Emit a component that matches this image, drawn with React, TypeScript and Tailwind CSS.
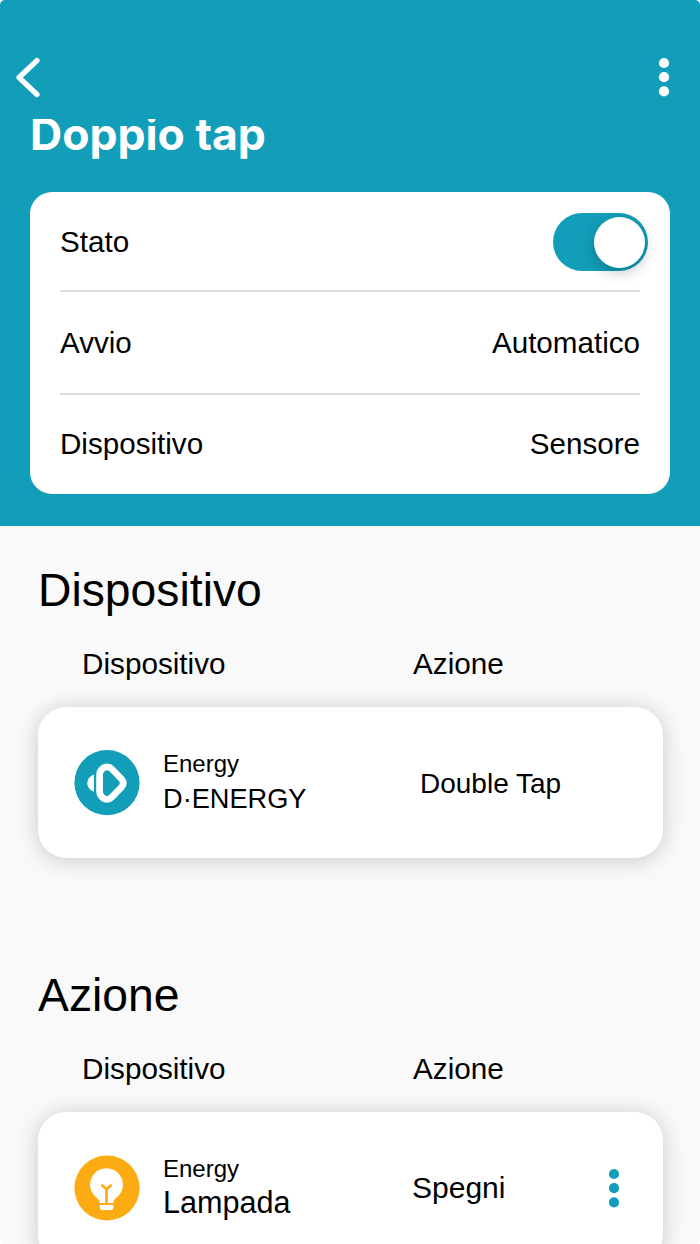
import React from "react";

type Item = {
  icon: React.ReactNode;
  name: string;
  nameClass: string;
  action: string;
  actionClass: string;
  menu?: boolean;
};

export default function App() {
  return (
    <div className="h-[1244px] w-[700px] overflow-hidden rounded-[5px] bg-[#f9f9f9] font-['Liberation_Sans',Arial,sans-serif] text-black">
      {/* Header */}
      <header className="h-[526px] bg-[#129eb8] px-[30px] pt-[56px]">
        <div className="-mx-[15px] flex h-[42px] items-center justify-between pr-[14px]">
          <button aria-label="Indietro">
            <svg width="26" height="42" viewBox="0 0 26 42" fill="none" className="block">
              <path d="M22 4.5 L4 21.5 L22 38.5" stroke="white" strokeWidth="5.2" strokeLinecap="round" strokeLinejoin="round" />
            </svg>
          </button>
          <button aria-label="Menu" className="text-white">
            <Dots />
          </button>
        </div>

        <h1 className="mt-[20.5px] flex h-[47.5px] items-center overflow-hidden font-[Inter,sans-serif] text-[44.5px] leading-[48px] font-bold whitespace-nowrap text-white">
          <span className="-mt-[16px]">Doppio tap</span>
        </h1>

        <div className="mt-[26px] flex h-[302px] flex-col rounded-[22px] bg-white px-[30px] text-[29.6px]">
          <Row label="Stato" className="h-[98px] pt-[2px]">
            <Toggle />
          </Row>
          <div className="h-[2px] shrink-0 bg-[#dcdcdc]" />
          <Row label="Avvio" className="h-[101px] pt-px">
            Automatico
          </Row>
          <div className="h-[2px] shrink-0 bg-[#dcdcdc]" />
          <Row label="Dispositivo" className="h-[98px]">
            Sensore
          </Row>
        </div>
      </header>

      <Section
        title="Dispositivo"
        item={{
          icon: <EnergyIcon />,
          name: "D·ENERGY",
          nameClass: "mt-[3px] text-[27.2px]",
          action: "Double Tap",
          actionClass: "pt-[3px] pl-[8px] text-[28px]",
        }}
      />
      <Section
        title="Azione"
        item={{
          icon: <BulbIcon />,
          name: "Lampada",
          nameClass: "mt-px mb-[2px] text-[30.6px]",
          action: "Spegni",
          actionClass: "text-[30px]",
          menu: true,
        }}
      />
    </div>
  );
}

function Row({ label, className, children }: { label: string; className: string; children: React.ReactNode }) {
  return (
    <div className={`flex shrink-0 items-center justify-between ${className}`}>
      <span>{label}</span>
      <span>{children}</span>
    </div>
  );
}

function Toggle() {
  return (
    <span className="-mr-2 flex h-[58px] w-[95px] items-center justify-end rounded-full bg-[#129eb8] pr-[3px]">
      <span className="size-[51px] rounded-full bg-white shadow-[0_5px_14px_rgba(0,0,0,0.22)]" />
    </span>
  );
}

function Section({ title, item }: { title: string; item: Item }) {
  return (
    <section className="flex h-[405px] flex-col pt-[34px]">
      <h2 className="pl-[38px] text-[46.3px] leading-[60px]">{title}</h2>
      <div className="mt-[24px] flex h-[40px] items-center pl-[82px] text-[29.7px]">
        <span className="w-[331px]">Dispositivo</span>
        <span>Azione</span>
      </div>
      {/* The list clips the card shadow at its top edge */}
      <div className="mt-[8px] overflow-hidden px-[37.5px] pt-[15px] pb-[40px]">
        <div className="flex h-[151px] items-center rounded-[28px] bg-white pl-[36.5px] shadow-[0_2px_22px_rgba(0,0,0,0.2)]">
          {item.icon}
          <div className="ml-[23px] w-[249px]">
            <div className="text-[24px] leading-[30px]">Energy</div>
            <div className={`leading-[34px] ${item.nameClass}`}>{item.name}</div>
          </div>
          <div className={`w-[195px] ${item.actionClass}`}>{item.action}</div>
          {item.menu && (
            <button aria-label="Opzioni" className="text-[#129eb8]">
              <Dots />
            </button>
          )}
        </div>
      </div>
    </section>
  );
}

function Dots() {
  return (
    <svg width="14" height="40" viewBox="0 0 14 40" fill="currentColor" className="block">
      <circle cx="7" cy="6" r="5.1" />
      <circle cx="7" cy="20.2" r="5.1" />
      <circle cx="7" cy="34.4" r="5.1" />
    </svg>
  );
}

function EnergyIcon() {
  return (
    <svg width="66" height="66" viewBox="0 0 66 66" className="shrink-0">
      <circle cx="33" cy="32.7" r="32.6" fill="#129eb8" />
      <path d="M20 24.5 V41.8 C15.3 40 13.3 36.5 13.3 33.2 C13.3 30 15.3 26.3 20 24.5Z" fill="white" />
      <path
        d="M25.6 24.5 C25.6 20.5 29.5 16.8 33.3 16.8 C35.3 16.8 36.6 17.8 37.8 19 L47.5 29 C50 31.6 50 34.6 47.5 37.2 L37.8 47.2 C36.6 48.4 35.3 49.4 33.3 49.4 C29.5 49.4 25.6 45.7 25.6 41.7Z"
        fill="none"
        stroke="white"
        strokeWidth="6.7"
        strokeLinejoin="round"
      />
    </svg>
  );
}

function BulbIcon() {
  return (
    <svg width="66" height="66" viewBox="0 0 66 66" className="shrink-0">
      <circle cx="33" cy="33" r="32.6" fill="#fdab13" />
      <path d="M32.5 13.2 A16.5 16.5 0 0 0 22.8 43 C24.8 44.5 25.8 45.5 25.8 48 H39.2 C39.2 45.5 40.2 44.5 42.2 43 A16.5 16.5 0 0 0 32.5 13.2Z" fill="white" />
      <path d="M32.5 48 V34.5 M28.3 30.5 L32.5 34.3 L36.7 30.5" fill="none" stroke="#fdab13" strokeWidth="2.7" strokeLinecap="round" strokeLinejoin="round" />
      <path d="M25.8 50 H39.2 V52.5 Q39.2 55 36.7 55 H28.3 Q25.8 55 25.8 52.5Z" fill="white" />
    </svg>
  );
}
